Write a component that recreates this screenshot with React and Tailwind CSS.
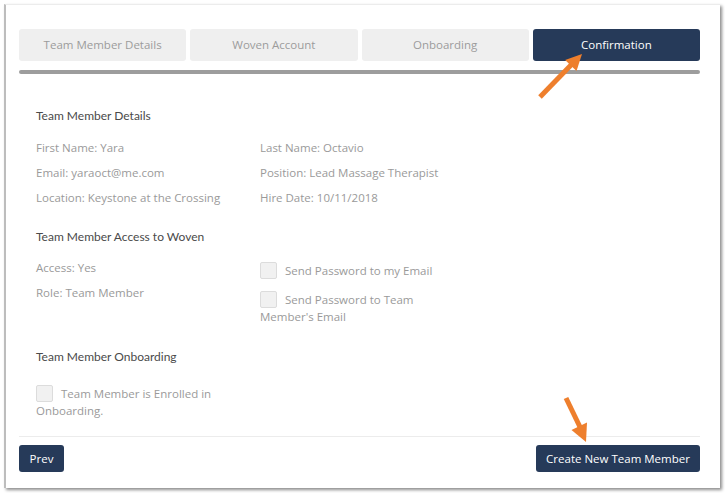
import React from 'react';

const tabs = ['Team Member Details', 'Woven Account', 'Onboarding', 'Confirmation'];

const Field = ({ children }) => (
  <div className="h-[25px] leading-[25px] text-[11.5px] text-[#9a9a9a]">{children}</div>
);

const Heading = ({ children }) => (
  <div className="text-[12px] text-[#4a4a4a] font-['Lato',sans-serif]">{children}</div>
);

const Box = () => (
  <span className="inline-block w-[17px] h-[17px] bg-[#f1f1f1] border border-[#dcdcdc] rounded-[2px] align-middle mr-[8px] -mt-[3px]" />
);

export default function App() {
  return (
    <div className="w-[725px] h-[493px] bg-white p-[4px] pr-[5px] pb-[5px] font-['Open_Sans',sans-serif]">
      <div className="relative w-full h-full bg-white border-l-[2px] border-l-[#bdbdbd] border-t border-t-[#ececec] shadow-[2px_2px_3px_rgba(0,0,0,0.45)] pl-[13px] pr-[20px] pt-[24px]">
        <div className="flex gap-[4px]">
          {tabs.map((t, i) => (
            <div
              key={t}
              className={`flex-1 h-[32px] rounded-[3px] flex items-center justify-center text-[11.5px] ${
                i === 3 ? 'bg-[#263a59] text-white' : 'bg-[#efefef] text-[#9c9c9c]'
              }`}
            >
              {t}
            </div>
          ))}
        </div>
        <div className="mt-[9px] h-[4px] rounded-full bg-[#9d9d9d]" />

        <div className="px-[17px] pt-[33px]">
          <Heading>Team Member Details</Heading>
          <div className="mt-[10px] grid grid-cols-[224px_1fr]">
            <div>
              <Field>First Name: Yara</Field>
              <Field>Email: yaraoct@me.com</Field>
              <Field>Location: Keystone at the Crossing</Field>
            </div>
            <div>
              <Field>Last Name: Octavio</Field>
              <Field>Position: Lead Massage Therapist</Field>
              <Field>Hire Date: 10/11/2018</Field>
            </div>
          </div>

          <div className="mt-[18px]">
            <Heading>Team Member Access to Woven</Heading>
          </div>
          <div className="mt-[9px] grid grid-cols-[224px_1fr]">
            <div>
              <Field>Access: Yes</Field>
              <Field>Role: Team Member</Field>
            </div>
            <div className="w-[180px] text-[11.5px] text-[#9a9a9a] leading-[17px] pt-[7px]">
              <div>
                <Box />Send Password to my Email
              </div>
              <div className="mt-[12px]">
                <Box />Send Password to Team Member's Email
              </div>
            </div>
          </div>

          <div className="mt-[23px]">
            <Heading>Team Member Onboarding</Heading>
          </div>
          <div className="mt-[19px] w-[190px] text-[11.5px] text-[#9a9a9a] leading-[17px]">
            <Box />Team Member is Enrolled in Onboarding.
          </div>
        </div>

        <div className="absolute left-[13px] right-[20px] bottom-0">
          <div className="h-px bg-[#ececec]" />
          <div className="flex justify-between pt-[8px] pb-[16px]">
            <button className="h-[27px] w-[45px] rounded-[3px] bg-[#263a59] text-white text-[11.5px]">Prev</button>
            <button className="h-[27px] w-[164px] rounded-[3px] bg-[#263a59] text-white text-[11.5px]">Create New Team Member</button>
          </div>
        </div>

        <svg className="absolute left-[524px] top-[40px]" width="60" height="62" viewBox="0 0 60 62">
          <line x1="10" y1="52" x2="42" y2="19" stroke="#ee7f2d" strokeWidth="5" />
          <polygon points="52,9 46.5,26.1 35.1,14.9" fill="#ee7f2d" />
        </svg>
        <svg className="absolute left-[550px] top-[387px]" width="40" height="56" viewBox="0 0 40 56">
          <line x1="10" y1="6" x2="24" y2="35" stroke="#ee7f2d" strokeWidth="5" />
          <polygon points="30,50 31,30.6 15.5,38" fill="#ee7f2d" />
        </svg>
      </div>
    </div>
  );
}
